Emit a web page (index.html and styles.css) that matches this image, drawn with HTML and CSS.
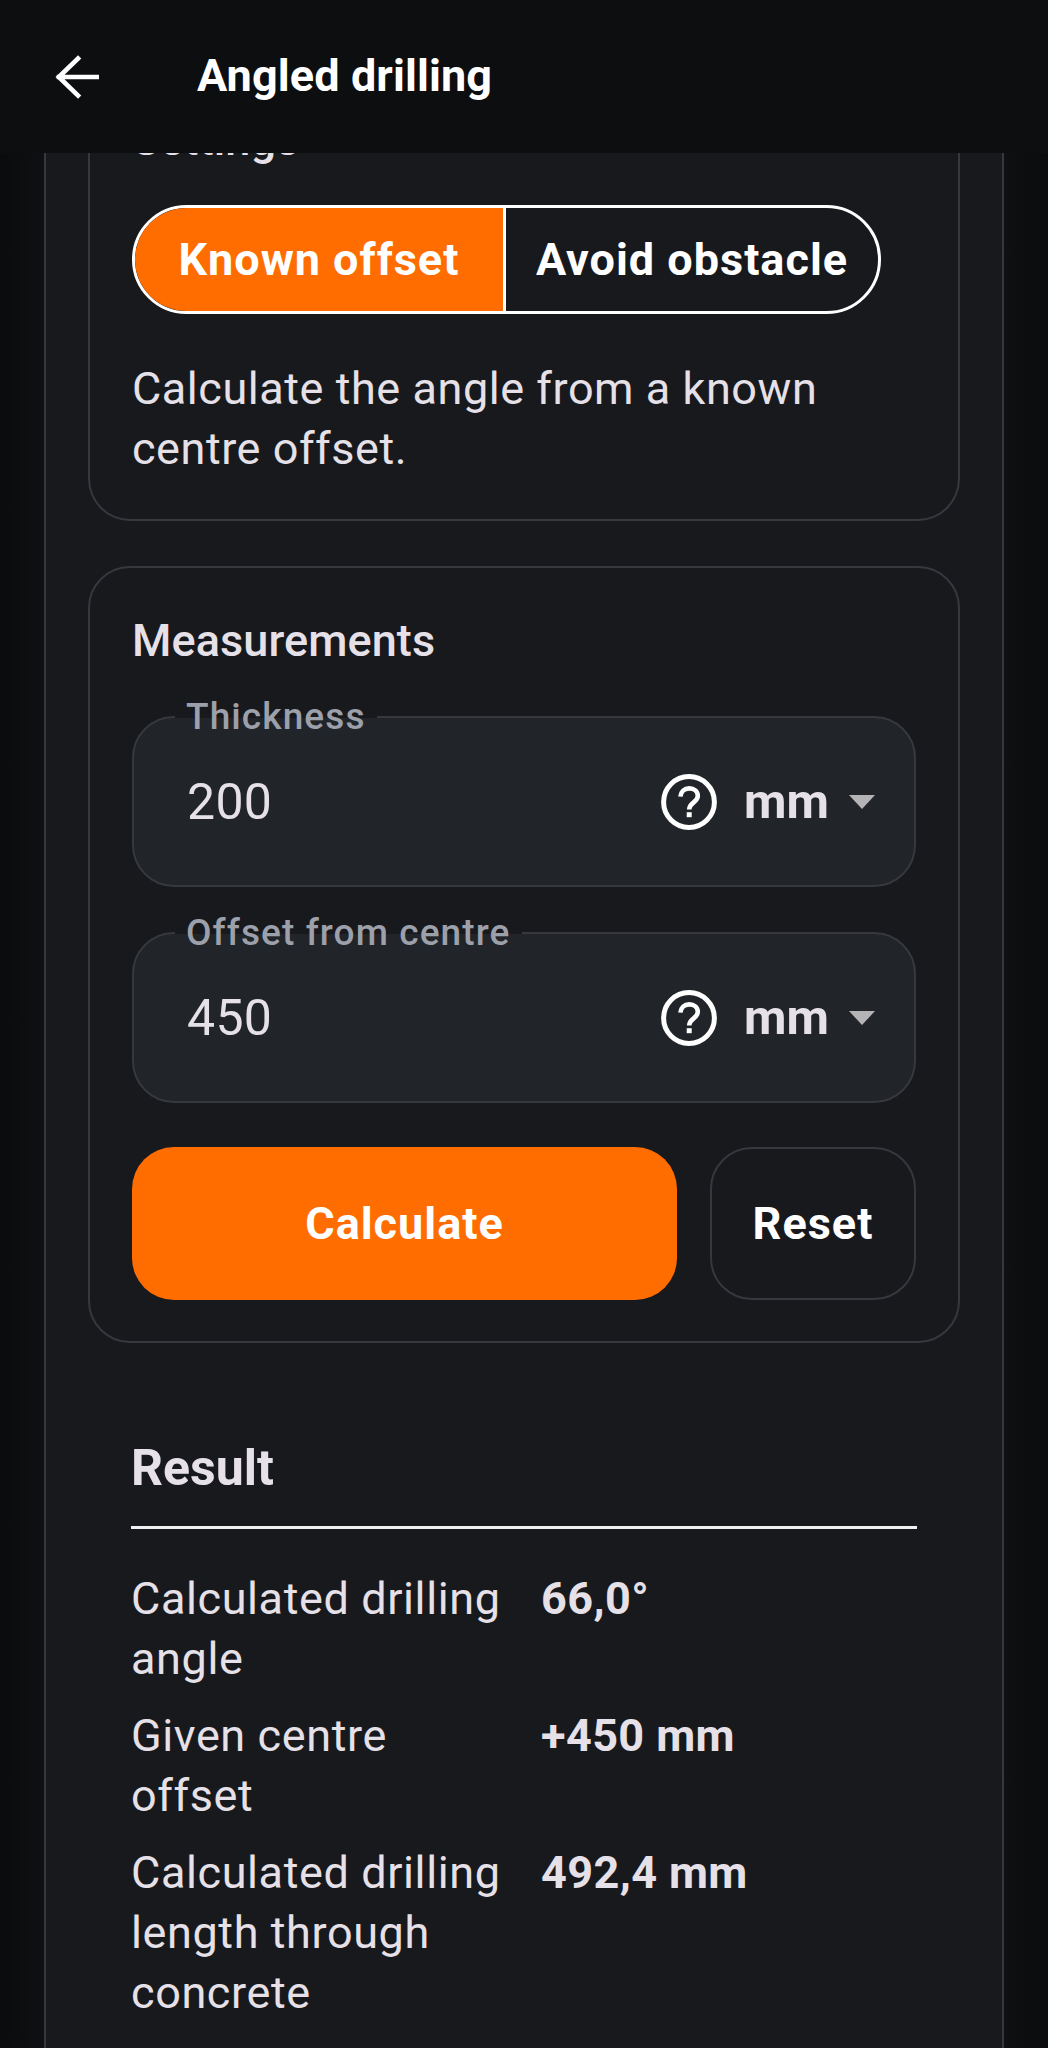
FILE: index.html
```html
<!DOCTYPE html>
<html lang="en">
<head>
<meta charset="utf-8">
<title>Angled drilling</title>
<link rel="stylesheet" href="styles.css">
</head>
<body>
<div class="app">
  <header class="topbar">
    <svg class="back" viewBox="0 0 44 44" width="44" height="44" fill="none" stroke="#fff" stroke-width="4.6" stroke-linecap="square"><path d="M42 22H4M23 3.5 3.8 22 23 40.5"/></svg>
    <h1 class="title">Angled drilling</h1>
  </header>
  <main class="viewport">
    <div class="panel">
      <section class="card card-settings">
        <h2 class="card-title">Settings</h2>
        <div class="segment">
          <div class="seg seg-on">Known offset</div>
          <div class="seg">Avoid obstacle</div>
        </div>
        <p class="desc">Calculate the angle from a known centre offset.</p>
      </section>
      <section class="card card-measure">
        <h2 class="card-title">Measurements</h2>
        <div class="field">
          <span class="field-label">Thickness</span>
          <span class="field-value">200</span>
          <svg class="help" viewBox="0 0 56 56" width="56" height="56" fill="none" stroke="#fff"><circle cx="28" cy="28" r="25.4" stroke-width="5"/><path d="M19.4 22.6c.4-5 4-8.2 8.8-8.2 5 0 8.6 3.2 8.6 7.6 0 6.4-8.6 6.4-8.6 13.6" stroke-width="4.6"/><path d="M28.2 38.2v5" stroke-width="5"/></svg>
          <span class="unit">mm</span>
          <span class="caret"></span>
        </div>
        <div class="field">
          <span class="field-label">Offset from centre</span>
          <span class="field-value">450</span>
          <svg class="help" viewBox="0 0 56 56" width="56" height="56" fill="none" stroke="#fff"><circle cx="28" cy="28" r="25.4" stroke-width="5"/><path d="M19.4 22.6c.4-5 4-8.2 8.8-8.2 5 0 8.6 3.2 8.6 7.6 0 6.4-8.6 6.4-8.6 13.6" stroke-width="4.6"/><path d="M28.2 38.2v5" stroke-width="5"/></svg>
          <span class="unit">mm</span>
          <span class="caret"></span>
        </div>
        <div class="actions">
          <button class="btn btn-primary">Calculate</button>
          <button class="btn btn-ghost">Reset</button>
        </div>
      </section>
      <section class="result">
        <h2 class="result-title">Result</h2>
        <dl class="rows">
          <div class="row"><dt>Calculated drilling angle</dt><dd>66,0°</dd></div>
          <div class="row"><dt>Given centre offset</dt><dd>+450 mm</dd></div>
          <div class="row"><dt>Calculated drilling length through concrete</dt><dd>492,4 mm</dd></div>
        </dl>
      </section>
    </div>
  </main>
</div>
</body>
</html>
```

FILE: styles.css
```css
* { box-sizing: border-box; }
html, body { margin: 0; padding: 0; background: #0b0c0e; }
body { font-family: Roboto, "Liberation Sans", sans-serif; color: #e6e1e8; }
.app { width: 1048px; height: 2048px; overflow: hidden; display: flex; flex-direction: column; }
.topbar { height: 153px; flex: none; background: #0d0e10; display: flex; align-items: center; padding: 0 0 0 55px; position: relative; z-index: 2; }
.back { flex: none; margin-right: 98px; }
.title { margin: 0 0 2px; font-size: 45px; font-weight: 700; color: #fff; line-height: 1; letter-spacing: .1px; }
.viewport { flex: 1; overflow: hidden; background: linear-gradient(90deg, #0a0b0d 0, #0f1012 44px, #0f1012 1004px, #0a0b0d 1048px); }
.panel { width: 960px; margin: -113px 0 0 44px; padding: 0 42px; background: #18191d; border: solid #36383e; border-width: 0 2px; min-height: 2100px; }
.card { border: 2px solid #36383e; border-radius: 42px; padding: 0 42px; }
.card-settings { border-top-color: transparent; padding-top: 68px; height: 481px; margin-bottom: 45px; }
.card-measure { height: 777px; padding-top: 43px; }
.card-title { margin: 0; font-size: 45px; font-weight: 500; line-height: 60px; color: #e6e1e8; letter-spacing: .1px; }
.segment { display: flex; width: 749px; height: 109px; margin-top: 35px; border: 3px solid #fff; border-radius: 55px; overflow: hidden; }
.seg { display: flex; align-items: center; justify-content: center; font-size: 45px; font-weight: 700; color: #fff; letter-spacing: 1px; flex: none; width: 371px; }
.seg-on { background: #ff6d00; border-right: 3px solid #fff; }
.seg + .seg { flex: 1; width: auto; }
.desc { margin: 45px 0 0; font-size: 45px; line-height: 60px; letter-spacing: .55px; color: #e6e1e8; }
.field { position: relative; display: flex; align-items: center; height: 171px; background: #212429; border: 2px solid #36383e; border-radius: 42px; padding: 0 39px 0 53px; margin-top: 45px; }
.field-label { position: absolute; left: 41px; top: -23px; padding: 0 11px; font-size: 37px; line-height: 44px; font-weight: 500; letter-spacing: 1.1px; color: #9ca0aa; background: linear-gradient(#18191d 0, #18191d 23px, #212429 23px); }
.field-value { flex: 1; font-size: 50px; letter-spacing: .3px; color: #e6e1e8; }
.help { flex: none; margin-right: 27px; }
.unit { font-size: 49px; font-weight: 700; color: #e6e1e8; margin-right: 20px; }
.caret { width: 0; height: 0; border-style: solid; border-width: 14px 13.5px 0; border-color: #b4b4b6 transparent transparent; }
.actions { display: flex; gap: 33px; margin-top: 44px; }
.btn { height: 153px; border-radius: 42px; font-family: inherit; font-size: 45px; font-weight: 700; color: #fff; padding: 0; letter-spacing: 1px; }
.btn-primary { width: 545px; background: #ff6d00; border: 0; }
.btn-ghost { flex: 1; background: transparent; border: 2px solid #36383e; }
.result { padding: 95px 43px 0; }
.result-title { margin: 0; font-size: 50px; font-weight: 700; line-height: 60px; color: #e6e1e8; }
.rows { margin: 28px 0 0; padding-top: 40px; border-top: 3px solid #f0f0f0; }
.row { display: grid; grid-template-columns: 410px 1fr; margin-bottom: 17px; }
dt { font-size: 45px; line-height: 60px; letter-spacing: .6px; color: #e6e1e8; padding-right: 30px; }
dd { margin: 0; font-size: 45px; line-height: 60px; font-weight: 700; letter-spacing: .4px; color: #e6e1e8; }
```
